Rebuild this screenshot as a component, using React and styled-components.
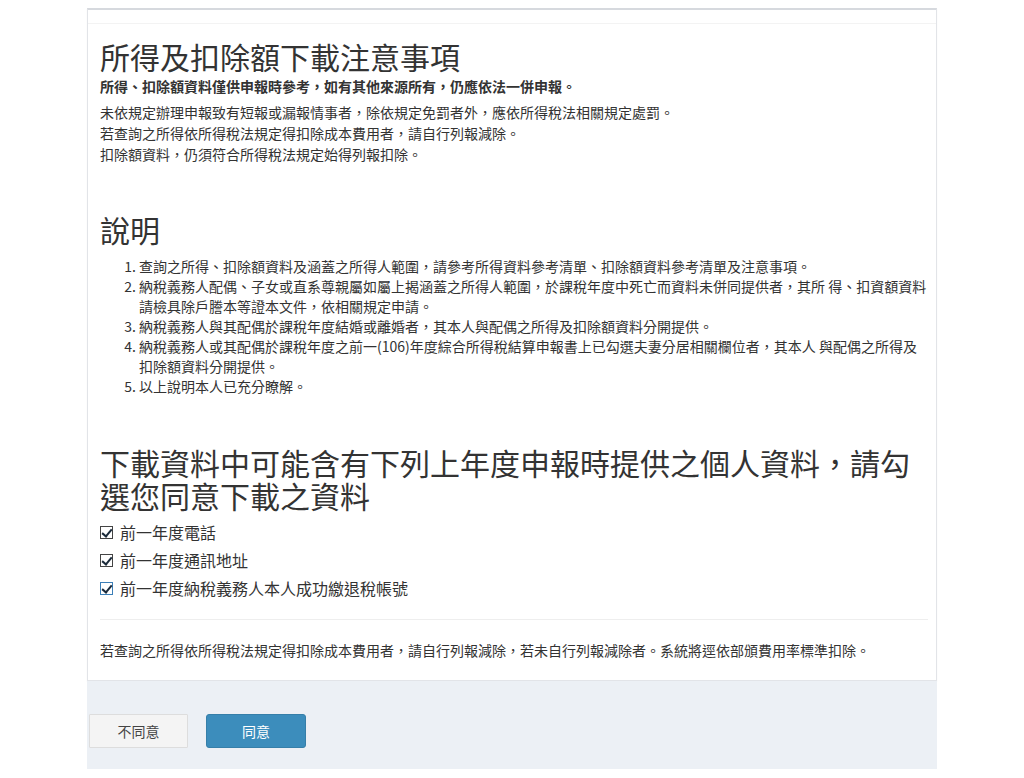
import React from 'react'
import styled, { createGlobalStyle } from 'styled-components'

const GlobalStyle = createGlobalStyle`
    body {
        margin: 0;
        background: #fff;
        color: #333;
        font-family: "Noto Sans CJK TC", "Noto Sans", sans-serif;
        font-size: 14px;
    }
`

const notes = [
    '查詢之所得、扣除額資料及涵蓋之所得人範圍，請參考所得資料參考清單、扣除額資料參考清單及注意事項。',
    '納稅義務人配偶、子女或直系尊親屬如屬上揭涵蓋之所得人範圍，於課稅年度中死亡而資料未併同提供者，其所 得、扣資額資料請檢具除戶謄本等證本文件，依相關規定申請。',
    '納稅義務人與其配偶於課稅年度結婚或離婚者，其本人與配偶之所得及扣除額資料分開提供。',
    '納稅義務人或其配偶於課稅年度之前一(106)年度綜合所得稅結算申報書上已勾選夫妻分居相關欄位者，其本人 與配偶之所得及扣除額資料分開提供。',
    '以上說明本人已充分瞭解。',
]

const options = ['前一年度電話', '前一年度通訊地址', '前一年度納稅義務人本人成功繳退稅帳號']

export default function App() {
    return (
        <>
            <GlobalStyle />
            <Wrapper>
                <Box>
                    <BoxHeader />
                    <BoxBody>
                        <Title>所得及扣除額下載注意事項</Title>
                        <Lead>所得、扣除額資料僅供申報時參考，如有其他來源所有，仍應依法一併申報。</Lead>
                        <Text>
                            未依規定辦理申報致有短報或漏報情事者，除依規定免罰者外，應依所得稅法相關規定處罰。<br />
                            若查詢之所得依所得稅法規定得扣除成本費用者，請自行列報減除。<br />
                            扣除額資料，仍須符合所得稅法規定始得列報扣除。
                        </Text>

                        <Title $top={48}>說明</Title>
                        <List>
                            {notes.map((n, i) => <li key={i}>{n}</li>)}
                        </List>

                        <Title $top={50}>下載資料中可能含有下列上年度申報時提供之個人資料，請勾選您同意下載之資料</Title>
                        <Options>
                            {options.map((o, i) => (
                                <Option key={o}>
                                    <Check type="checkbox" defaultChecked $focus={i === 2} />
                                    {o}
                                </Option>
                            ))}
                        </Options>
                        <Divider />
                        <Note>若查詢之所得依所得稅法規定得扣除成本費用者，請自行列報減除，若未自行列報減除者。系統將逕依部頒費用率標準扣除。</Note>
                    </BoxBody>
                </Box>
                <Actions>
                    <Button>不同意</Button>
                    <Button $primary>同意</Button>
                </Actions>
            </Wrapper>
        </>
    )
}

const Wrapper = styled.div`
    width: 850px;
    margin: 0 auto;
    padding-top: 8px;
    background: #fff;
`
const Box = styled.div`
    background: #fff;
    border: 1px solid #e2e4e8;
    border-top: 2px solid #d6d9de;
    box-shadow: 0 1px 1px rgba(0, 0, 0, 0.06);
`
const BoxHeader = styled.div`
    height: 13px;
    border-bottom: 1px solid #f3f3f3;
`
const BoxBody = styled.div`
    padding: 0 8px 20px 12px;
`
const Title = styled.h2`
    margin: ${p => p.$top || 16}px 0 3px;
    font-size: 30px;
    line-height: 33px;
    font-weight: 400;
    color: #333;
`
const Lead = styled.p`
    margin: 0 0 5px;
    font-weight: bold;
    line-height: 21px;
`
const Text = styled.p`
    margin: 0;
    line-height: 21px;
`
const List = styled.ol`
    margin: 10px 0 0;
    padding-left: 39px;
    line-height: 20px;
`
const Options = styled.div`
    margin-top: 6px;
    display: flex;
    flex-direction: column;
`
const Option = styled.label`
    display: flex;
    align-items: center;
    gap: 7px;
    height: 28px;
    font-size: 16px;
`
const Check = styled.input`
    appearance: none;
    position: relative;
    margin: 0;
    width: 13px;
    height: 13px;
    border: 1px solid ${p => p.$focus ? '#3c7fb8' : '#444'};
    background: #fff;
    &:checked::after {
        content: '';
        position: absolute;
        left: 3px;
        top: 0px;
        width: 4px;
        height: 8px;
        border: solid #1a2a3a;
        border-width: 0 2px 2px 0;
        transform: rotate(40deg);
    }
`
const Divider = styled.hr`
    margin: 17px 0 20px;
    border: 0;
    border-top: 1px solid #eee;
`
const Note = styled.p`
    margin: 0;
    line-height: 20px;
`
const Actions = styled.div`
    background: #ecf0f5;
    display: flex;
    gap: 18px;
    padding: 33px 0 21px 2px;
`
const Button = styled.button`
    width: ${p => p.$primary ? 100 : 99}px;
    height: 34px;
    font-family: inherit;
    font-size: 14px;
    border-radius: ${p => p.$primary ? 3 : 1}px;
    border: 1px solid ${p => p.$primary ? '#367fa9' : '#ddd'};
    background: ${p => p.$primary ? '#3c8dbc' : '#f4f4f4'};
    color: ${p => p.$primary ? '#fff' : '#444'};
`
